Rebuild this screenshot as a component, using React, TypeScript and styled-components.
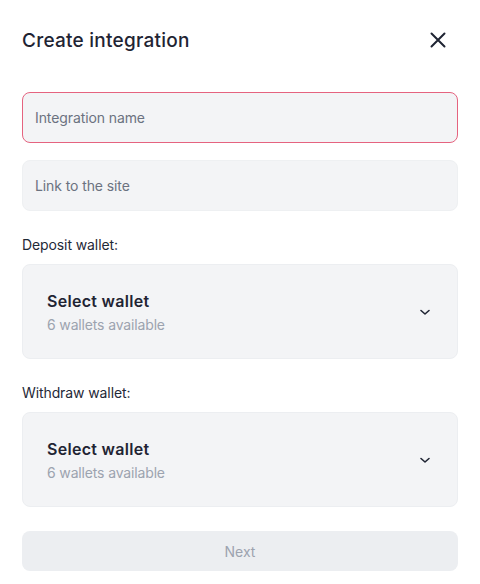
import React from "react";
import styled, { createGlobalStyle } from "styled-components";

const Global = createGlobalStyle`
  html, body { margin: 0; padding: 0; background: #ffffff; }
  body { font-family: Inter, "Noto Sans", sans-serif; -webkit-font-smoothing: antialiased; }
  * { box-sizing: border-box; }
`;

const Panel = styled.div`
  width: 480px;
  padding: 24px 22px 13px 22px;
  display: flex;
  flex-direction: column;
`;

const Header = styled.div`
  height: 32px;
  display: flex;
  align-items: center;
  justify-content: space-between;
  margin-bottom: 36px;
`;

const Title = styled.h1`
  margin: 0;
  font-family: Inter, sans-serif;
  font-size: 19px;
  font-weight: 500;
  color: #1f2433;
  letter-spacing: 0.25px;
`;

const CloseButton = styled.button`
  border: none;
  background: transparent;
  padding: 0;
  width: 32px;
  height: 32px;
  display: flex;
  align-items: center;
  justify-content: center;
  color: #1f2433;
  margin-right: 4px;
`;

const Field = styled.div<{ $error?: boolean; $gap?: number }>`
  height: 51px;
  border-radius: 8px;
  background: #f3f4f6;
  border: 1px solid ${(p) => (p.$error ? "#e5637f" : "#eef0f2")};
  display: flex;
  align-items: center;
  padding: 0 12px;
  margin-bottom: ${(p) => p.$gap ?? 0}px;
  font-size: 14px;
  letter-spacing: -0.1px;
  color: #6b7280;
`;

const Label = styled.div<{ $top: number }>`
  margin-top: ${(p) => p.$top}px;
  margin-bottom: 9px;
  font-size: 14px;
  line-height: 20px;
  letter-spacing: -0.1px;
  color: #1f2937;
`;

const SelectBox = styled.div`
  height: 95px;
  border-radius: 8px;
  background: #f3f4f6;
  border: 1px solid #eceef1;
  display: flex;
  align-items: center;
  justify-content: space-between;
  padding: 0 26px 0 24px;
`;

const SelectText = styled.div`
  display: flex;
  flex-direction: column;
  gap: 3px;
  margin-top: 1px;
`;

const SelectTitle = styled.div`
  font-size: 16px;
  line-height: 22px;
  font-weight: 600;
  letter-spacing: 0.3px;
  color: #1f2433;
`;

const SelectSub = styled.div`
  font-size: 14px;
  line-height: 20px;
  letter-spacing: -0.15px;
  color: #9ca3af;
`;

const NextButton = styled.button`
  margin-top: 24px;
  height: 40px;
  border: none;
  border-radius: 8px;
  background: #eceef1;
  color: #9ca3af;
  font-family: Inter, sans-serif;
  font-size: 14px;
`;

const Chevron = () => (
  <svg width="12" height="12" viewBox="0 0 12 12" fill="none">
    <path d="M2 4.5 L6 8 L10 4.5" stroke="#1f2433" strokeWidth="1.6" strokeLinecap="round" strokeLinejoin="round" />
  </svg>
);

const CloseIcon = () => (
  <svg width="18" height="18" viewBox="0 0 18 18" fill="none">
    <path d="M2.5 2.5 L15.5 15.5 M15.5 2.5 L2.5 15.5" stroke="#1f2433" strokeWidth="2" strokeLinecap="round" />
  </svg>
);

const WalletSelect = () => (
  <SelectBox>
    <SelectText>
      <SelectTitle>Select wallet</SelectTitle>
      <SelectSub>6 wallets available</SelectSub>
    </SelectText>
    <Chevron />
  </SelectBox>
);

export default function App() {
  return (
    <>
      <Global />
      <Panel>
        <Header>
          <Title>Create integration</Title>
          <CloseButton aria-label="Close">
            <CloseIcon />
          </CloseButton>
        </Header>
        <Field $error $gap={17}>Integration name</Field>
        <Field>Link to the site</Field>
        <Label $top={24}>Deposit wallet:</Label>
        <WalletSelect />
        <Label $top={24}>Withdraw wallet:</Label>
        <WalletSelect />
        <NextButton>Next</NextButton>
      </Panel>
    </>
  );
}
